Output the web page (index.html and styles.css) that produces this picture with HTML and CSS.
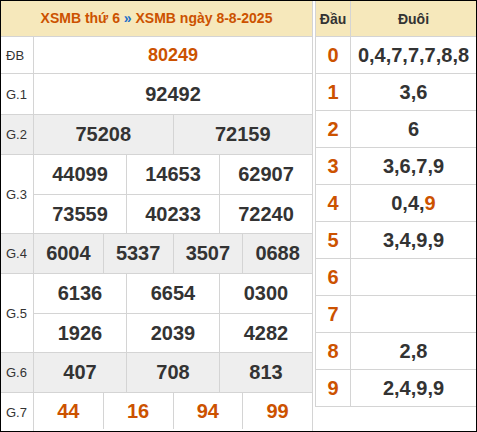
FILE: index.html
```html
<!DOCTYPE html>
<html lang="vi">
<head>
<meta charset="utf-8">
<title>XSMB 8-8-2025</title>
<link rel="stylesheet" href="styles.css">
</head>
<body>
<div class="frame">
  <div class="kq">
    <div class="kq-head"><span class="title">XSMB thứ 6 <span class="sep">»</span> XSMB ngày 8-8-2025</span></div>
    <div class="grp h-db">
      <div class="lbl">ĐB</div>
      <div class="rows"><div class="sub"><div class="v hot">80249</div></div></div>
    </div>
    <div class="grp h-g1">
      <div class="lbl">G.1</div>
      <div class="rows"><div class="sub"><div class="v">92492</div></div></div>
    </div>
    <div class="grp alt">
      <div class="lbl">G.2</div>
      <div class="rows"><div class="sub"><div class="v">75208</div><div class="v">72159</div></div></div>
    </div>
    <div class="grp">
      <div class="lbl">G.3</div>
      <div class="rows">
        <div class="sub"><div class="v">44099</div><div class="v">14653</div><div class="v">62907</div></div>
        <div class="sub"><div class="v">73559</div><div class="v">40233</div><div class="v">72240</div></div>
      </div>
    </div>
    <div class="grp alt">
      <div class="lbl">G.4</div>
      <div class="rows"><div class="sub"><div class="v">6004</div><div class="v">5337</div><div class="v">3507</div><div class="v">0688</div></div></div>
    </div>
    <div class="grp">
      <div class="lbl">G.5</div>
      <div class="rows">
        <div class="sub"><div class="v">6136</div><div class="v">6654</div><div class="v">0300</div></div>
        <div class="sub"><div class="v">1926</div><div class="v">2039</div><div class="v">4282</div></div>
      </div>
    </div>
    <div class="grp alt">
      <div class="lbl">G.6</div>
      <div class="rows"><div class="sub"><div class="v">407</div><div class="v">708</div><div class="v">813</div></div></div>
    </div>
    <div class="grp h-g7 last">
      <div class="lbl">G.7</div>
      <div class="rows"><div class="sub"><div class="v hot">44</div><div class="v hot">16</div><div class="v hot">94</div><div class="v hot">99</div></div></div>
    </div>
  </div>
  <div class="lt">
    <div class="lt-row lt-head"><div class="d">Đầu</div><div class="t">Đuôi</div></div>
    <div class="lt-row"><div class="d">0</div><div class="t">0,4,7,7,7,8,8</div></div>
    <div class="lt-row"><div class="d">1</div><div class="t">3,6</div></div>
    <div class="lt-row"><div class="d">2</div><div class="t">6</div></div>
    <div class="lt-row"><div class="d">3</div><div class="t">3,6,7,9</div></div>
    <div class="lt-row"><div class="d">4</div><div class="t"><span>0,4,<span class="hot">9</span></span></div></div>
    <div class="lt-row"><div class="d">5</div><div class="t">3,4,9,9</div></div>
    <div class="lt-row"><div class="d">6</div><div class="t"></div></div>
    <div class="lt-row"><div class="d">7</div><div class="t"></div></div>
    <div class="lt-row"><div class="d">8</div><div class="t">2,8</div></div>
    <div class="lt-row"><div class="d">9</div><div class="t">2,4,9,9</div></div>
  </div>
</div>
</body>
</html>
```

FILE: styles.css
```css
* { box-sizing: border-box; }
html, body { margin: 0; padding: 0; background: #fff; }
body { font-family: "Liberation Sans", Arial, sans-serif; color: #333; }

.frame {
  width: 477px;
  height: 432px;
  border: 1px solid #000;
  display: flex;
  align-items: flex-start;
  gap: 2px;
  overflow: hidden;
}

.kq {
  width: 312px;
  height: 430px;
  border-right: 1px solid #d4d4d4;
  display: flex;
  flex-direction: column;
}

.kq-head {
  height: 36px;
  background: #f6e8bb;
  border-bottom: 1px solid #d4d4d4;
  color: #cc5200;
  font-weight: bold;
  font-size: 14px;
  display: flex;
  align-items: center;
  justify-content: center;
  padding-bottom: 1px;
}
.kq-head .sep { color: #1e6fc8; }

.grp {
  display: flex;
  border-bottom: 1px solid #d4d4d4;
}
.grp.alt { background: #eeeeee; }
.grp.last { border-bottom: 0; flex: 1; }

.lbl {
  width: 33px;
  flex: none;
  border-right: 1px solid #d4d4d4;
  font-size: 13px;
  color: #333;
  display: flex;
  align-items: center;
  padding-left: 5px;
}

.rows { flex: 1; display: flex; flex-direction: column; }
.sub { display: flex; height: 39px; }
.sub + .sub { border-top: 1px solid #d4d4d4; }
.h-db .sub { height: 36px; }
.h-g1 .sub { height: 40px; }
.h-g7 .sub { height: 36px; }

.v {
  flex: 1;
  display: flex;
  align-items: center;
  justify-content: center;
  font-weight: bold;
  font-size: 20px;
  color: #333;
}
.h-db .v { font-size: 18px; }
.v + .v { border-left: 1px solid #d4d4d4; }
.hot { color: #cc5200; }
.v.hot { color: #cc5200; }

.lt {
  width: 161px;
  border-left: 1px solid #d4d4d4;
  display: flex;
  flex-direction: column;
}
.lt-row {
  display: flex;
  height: 37px;
  border-bottom: 1px solid #d4d4d4;
}
.lt-head {
  height: 36px;
  background: #f6e8bb;
}
.lt-row .d {
  width: 35px;
  flex: none;
  border-right: 1px solid #d4d4d4;
  display: flex;
  align-items: center;
  justify-content: center;
  font-weight: bold;
  font-size: 20px;
  color: #cc5200;
}
.lt-row .t {
  flex: 1;
  display: flex;
  align-items: center;
  justify-content: center;
  font-weight: bold;
  font-size: 20px;
  color: #333;
}
.lt-head .d, .lt-head .t {
  font-size: 14px;
  color: #333;
}
```
